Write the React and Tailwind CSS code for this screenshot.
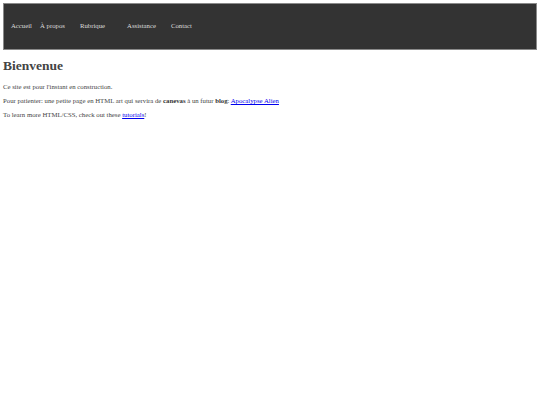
export default function App() {
  const links = [
    { label: 'Accueil', cls: 'ml-[7px]' },
    { label: 'À propos', cls: 'ml-[8px]' },
    { label: 'Rubrique', cls: 'ml-[15px]' },
    { label: 'Assistance', cls: 'ml-[22px]' },
    { label: 'Contact', cls: 'ml-[15px]' },
  ];

  return (
    <div className="min-h-[405px] bg-white px-[3px] pt-[3px] font-['Liberation_Serif',serif] text-[#444]">
      <nav className="flex h-[47px] items-center border border-[#8a8a8a] bg-[#333]">
        {links.map((l) => (
          <a key={l.label} className={`${l.cls} text-[6.75px] text-[#ddd]`}>
            {l.label}
          </a>
        ))}
      </nav>

      <h1 className="mt-[8px] text-[13.5px] font-bold leading-[16px] text-[#444]">Bienvenue</h1>

      <div className="mt-[9px] space-y-[6px] text-[6.75px] leading-[8px]">
        <p>Ce site est pour l'instant en construction.</p>
        <p>
          Pour patienter: une petite page en HTML art qui servira de <b className="text-[#333]">canevas</b> à un futur{' '}
          <b className="text-[#333]">blog</b>:{' '}
          <a href="#" className="text-[#00e] underline">
            Apocalypse Alien
          </a>
        </p>
        <p>
          To learn more HTML/CSS, check out these{' '}
          <a href="#" className="text-[#00e] underline">
            tutorials
          </a>
          !
        </p>
      </div>
    </div>
  );
}
